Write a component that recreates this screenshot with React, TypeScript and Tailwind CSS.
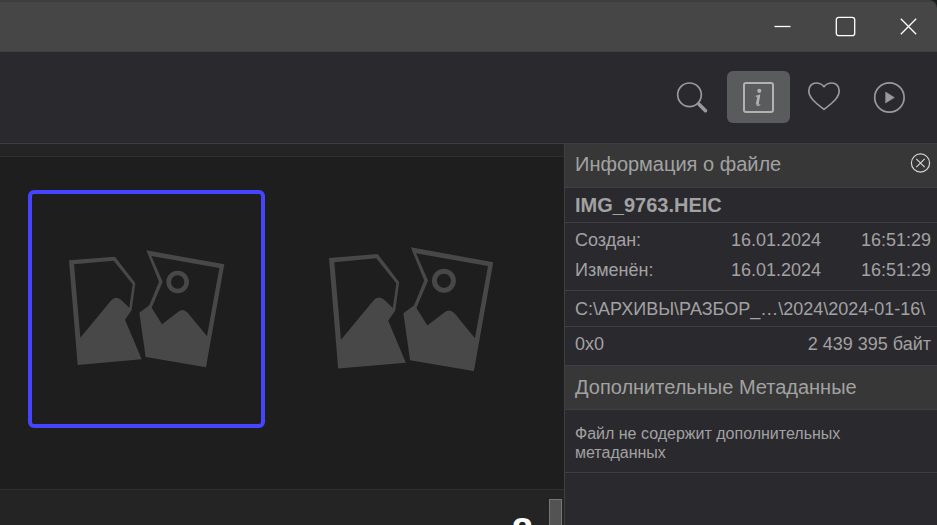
import type { ReactNode } from "react";

const dates = [
  { label: "Создан:", date: "16.01.2024", time: "16:51:29" },
  { label: "Изменён:", date: "16.01.2024", time: "16:51:29" },
];

function BrokenImage({ className }: { className: string }) {
  return (
    <svg viewBox="146 210 468 354" className={className} aria-hidden="true">
      <g fill="#484848">
        <path
          fillRule="evenodd"
          d="M146 241L284 230L345 310L334 390L314 419L364 538L172 555ZM161 253L180 473L271 363Q287 344 305 362L327 383L337 313L280 242Z"
        />
        <path
          fillRule="evenodd"
          d="M378 211L612 253L557 562L376 531L357 398L387 376L416 305ZM393 228L427 305L394 383L425 433L474 395Q488 384 502 398L560 469L597 264Z"
        />
      </g>
      <circle cx="472" cy="306" r="27" fill="none" stroke="#484848" strokeWidth="14" />
    </svg>
  );
}

function WindowButton({ label, children }: { label: string; children: ReactNode }) {
  return (
    <button aria-label={label} className="grid h-12 w-[63px] place-items-center">
      <svg width="21" height="21" viewBox="0 0 21 21" fill="none" stroke="#fff" strokeWidth="1.3">
        {children}
      </svg>
    </button>
  );
}

function TitleBar() {
  return (
    <header className="flex h-[52px] shrink-0 items-start justify-end rounded-tr-lg border-t-2 border-b border-t-[#3e3e3e] border-b-[#3e3e40] bg-[#464646]">
      <div className="-mr-[3px] flex">
        <WindowButton label="Свернуть">
          <path d="M2.5 10.5h16" />
        </WindowButton>
        <WindowButton label="Развернуть">
          <rect x="1.3" y="1.3" width="18.4" height="18.4" rx="2.5" />
        </WindowButton>
        <WindowButton label="Закрыть">
          <path d="M2.8 2.8l15.4 15.4M18.2 2.8l-15.4 15.4" />
        </WindowButton>
      </div>
    </header>
  );
}

function ToolButton({
  label,
  active = false,
  children,
}: {
  label: string;
  active?: boolean;
  children: ReactNode;
}) {
  return (
    <button
      aria-label={label}
      aria-pressed={active}
      className={
        active
          ? "grid h-[52px] w-[63px] place-items-center rounded-md bg-[#5a5b5d] text-[#b2b2b2]"
          : "grid h-[52px] w-[63px] place-items-center text-[#9a9a9c]"
      }
    >
      <svg
        width="35"
        height="34"
        viewBox="0 0 35 34"
        fill="none"
        stroke="currentColor"
        strokeWidth="1.7"
      >
        {children}
      </svg>
    </button>
  );
}

function Toolbar() {
  return (
    <nav className="flex h-[92px] shrink-0 items-center justify-end gap-[2px] border-b border-[#3f3f43] bg-[#2a292e] pr-[17px] pb-[2px]">
      <ToolButton label="Поиск">
        <circle cx="13.5" cy="14.8" r="11.8" />
        <path d="M22 23.2l1.5 1.5" />
        <path d="M23 24.2l6.5 6.5" strokeWidth="3.6" strokeLinecap="round" />
      </ToolButton>
      <ToolButton label="Информация" active>
        <rect x="3" y="3" width="29" height="29" rx="2" strokeWidth="2" />
        <circle cx="18.3" cy="10.8" r="2.1" fill="currentColor" stroke="none" />
        <path
          d="M14.8 16.4Q17.3 16 18.4 15.4L16.1 23.8Q15.6 26.6 19.2 24.4"
          strokeWidth="1.2"
        />
        <path d="M17.8 15.8L16.2 24.6" strokeWidth="2.6" />
      </ToolButton>
      <ToolButton label="Избранное">
        <path d="M18 29.4C11 24 2.8 18.2 2.8 11C2.8 6.2 6 3 10.3 3C13.8 3 16.2 4.6 18 6.6C19.8 4.6 22.2 3 25.7 3C30 3 33.2 6.2 33.2 11C33.2 18.2 25 24 18 29.4Z" />
      </ToolButton>
      <ToolButton label="Слайд-шоу">
        <circle cx="18.4" cy="17.5" r="14.7" />
        <path d="M14.6 12v11L23.4 17.5Z" fill="currentColor" strokeWidth="0.5" />
      </ToolButton>
    </nav>
  );
}

function Gallery() {
  return (
    <main className="flex min-w-0 flex-1 flex-col bg-[#1e1e1e]">
      <div className="h-[13px] shrink-0 border-b border-[#2e2e2e] bg-[#242424]" />
      <div className="flex min-h-0 flex-1 items-start gap-7 overflow-hidden px-7 pt-[33px]">
        <div className="grid h-[238px] w-[237px] shrink-0 place-items-center rounded-md border-4 border-[#4545ff]">
          <BrokenImage className="w-[156px]" />
        </div>
        <div className="grid h-[238px] w-[237px] shrink-0 place-items-center">
          <BrokenImage className="w-[165px]" />
        </div>
      </div>
      <div className="flex h-9 shrink-0 items-start justify-end gap-4 overflow-hidden border-t border-[#303030] bg-[#242424] pr-[2px]">
        <span className="pt-5 text-[38px] leading-[44px] font-bold text-white">8</span>
        <div className="mt-[9px] h-10 w-[13px] border border-[#777] bg-[#535353]" />
      </div>
    </main>
  );
}

function InfoPanel() {
  return (
    <aside className="w-[373px] shrink-0 border-l border-[#3f3f41] bg-[#2a292e] text-lg leading-[30px] text-[#a2a2a2]">
      <div className="flex h-11 items-center justify-between border-b border-[#3f3f43] bg-[#373737] pr-[6px] pb-1 pl-[10px]">
        <h2 className="text-xl">Информация о файле</h2>
        <button aria-label="Закрыть панель">
          <svg width="21" height="21" viewBox="0 0 21 21" fill="none" stroke="#d4d4d4" strokeWidth="1.2">
            <circle cx="10.5" cy="10" r="9.1" />
            <path d="M6.3 5.8l8.4 8.4M14.7 5.8l-8.4 8.4" />
          </svg>
        </button>
      </div>
      <h3 className="h-[35px] border-b border-[#3f3f43] px-[10px] pt-[2px] text-xl leading-[30px] font-bold">
        IMG_9763.HEIC
      </h3>
      <div className="border-b border-[#3f3f43] pt-[2px] pr-[6px] pb-[5px] pl-[10px]">
        <table className="w-full">
          <tbody>
            {dates.map((row) => (
              <tr key={row.label}>
                <th scope="row" className="p-0 text-left font-normal">
                  {row.label}
                </th>
                <td className="w-[110px] p-0 text-right">{row.date}</td>
                <td className="w-[110px] p-0 text-right">{row.time}</td>
              </tr>
            ))}
          </tbody>
        </table>
      </div>
      <p className="h-9 border-b border-[#3f3f43] px-[10px] pt-[3px] whitespace-nowrap">
        C:\АРХИВЫ\РАЗБОР_…\2024\2024-01-16\
      </p>
      <div className="flex h-[39px] justify-between border-b border-[#3f3f43] pt-[2px] pr-[6px] pl-[10px]">
        <span>0x0</span>
        <span>2 439 395 байт</span>
      </div>
      <div className="flex h-11 items-center border-b border-[#3f3f43] bg-[#373737] px-[10px] pb-[2px]">
        <h2 className="text-xl">Дополнительные Метаданные</h2>
      </div>
      <p className="border-b border-[#3f3f43] pt-[14px] pr-16 pb-[10px] pl-[10px] text-base leading-[19px]">
        Файл не содержит дополнительных метаданных
      </p>
    </aside>
  );
}

export default function App() {
  return (
    <div className="flex h-screen flex-col overflow-hidden bg-[#1a1f1f] font-['Liberation_Sans',Arial,sans-serif]">
      <TitleBar />
      <Toolbar />
      <div className="flex min-h-0 flex-1">
        <Gallery />
        <InfoPanel />
      </div>
    </div>
  );
}
